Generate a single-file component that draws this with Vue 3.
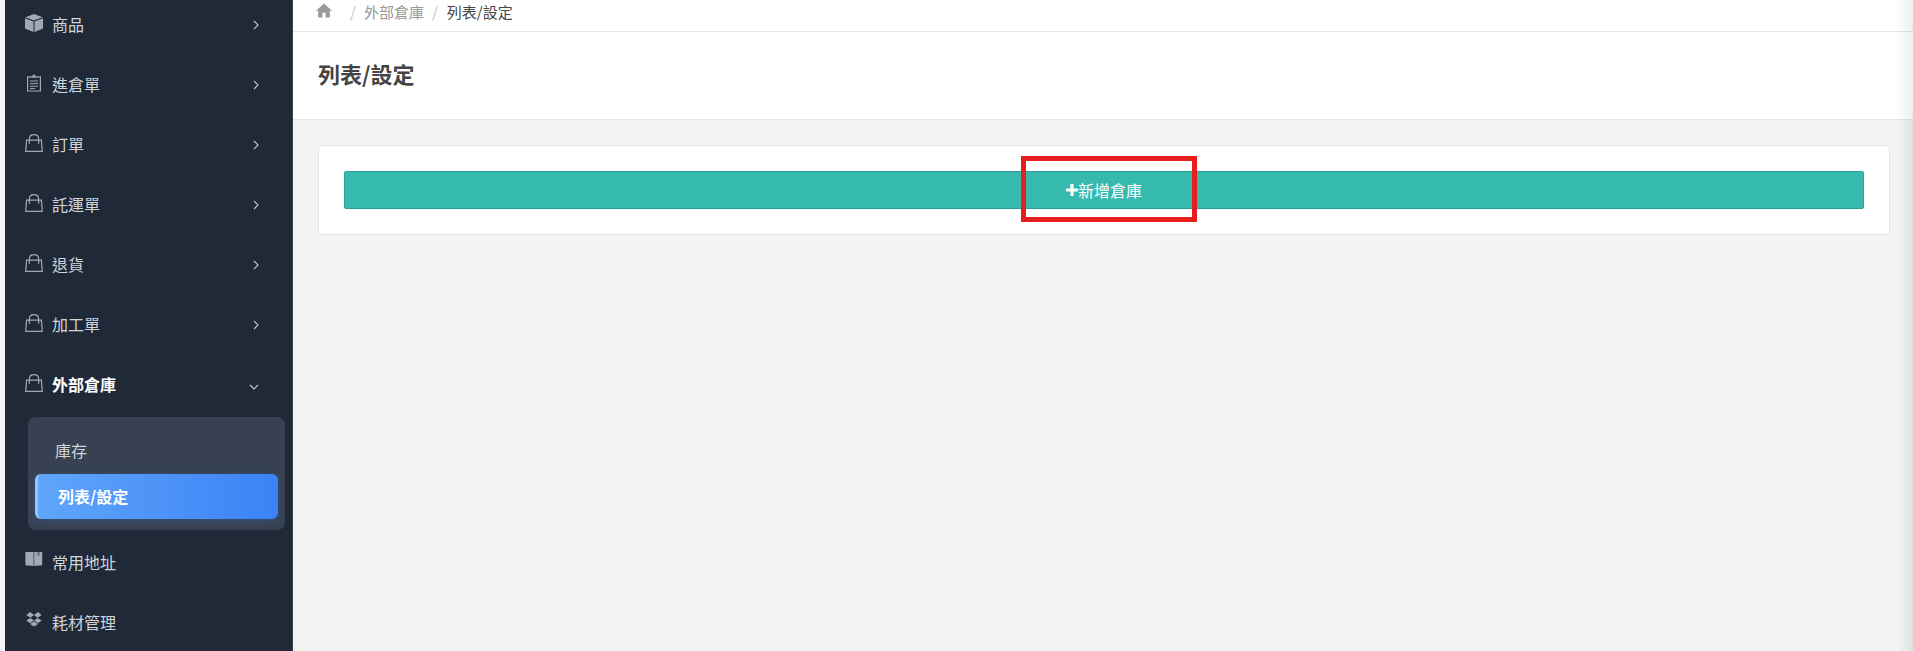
<template>
  <div class="layout">
    <aside class="sidebar">
      <nav class="nav">
        <template v-for="item in menu" :key="item.label">
          <div class="nav-item" :class="{ open: item.open }">
            <svg class="nav-icon" viewBox="0 0 18 18">
              <template v-if="item.icon === 'cube'">
                <path d="M9 0 17.6 3.2 9 6.4 .4 3.2Z" fill="#a3a9b3" />
                <path d="M0 4.2 8.5 7.4V18L0 14.6Z" fill="#a3a9b3" />
                <path d="M18 4.2 9.5 7.4V18L18 14.6Z" fill="#a3a9b3" />
              </template>
              <template v-else-if="item.icon === 'clipboard'">
                <path d="M5.5 2.8H2.6V17H15.4V2.8H12.5" fill="none" stroke="#a3a9b3" stroke-width="1.2" />
                <path d="M5.5 3.8V2.2H7.6V.8H10.4V2.2H12.5V3.8Z" fill="#a3a9b3" />
                <path d="M5 7H13M5 9.6H13M5 12.2H13M5 14.6H10" stroke="#a3a9b3" stroke-width="1" />
              </template>
              <template v-else-if="item.icon === 'bag'">
                <path d="M.7 17.3 1.6 6.2H16.4L17.3 17.3Z" fill="none" stroke="#a3a9b3" stroke-width="1.2" />
                <path d="M4.4 9.8V5C4.4 2.2 6.2.7 9 .7S13.6 2.2 13.6 5V9.8" fill="none" stroke="#a3a9b3" stroke-width="1.2" />
              </template>
              <template v-else-if="item.icon === 'book'">
                <path d="M.4 0H8.6V14L.4 13.2Z" fill="#a3a9b3" />
                <path d="M9.2 0H17.2V13.2L9.2 14Z" fill="#a3a9b3" />
                <path d="M12.4 0H14.6V3.6H12.4Z" fill="#6b7280" />
              </template>
              <template v-else>
                <path d="M5 0 9 3 5.4 5.8 1.4 3Z" fill="#a3a9b3" />
                <path d="M13 0 9 3 12.6 5.8 16.6 3Z" fill="#a3a9b3" />
                <path d="M5.4 6 9 8.6 5 11.2 1.4 8.6Z" fill="#a3a9b3" />
                <path d="M12.6 6 9 8.6 13 11.2 16.6 8.6Z" fill="#a3a9b3" />
                <path d="M5 12 9 9.6 13 12 9 14.4Z" fill="#a3a9b3" />
              </template>
            </svg>
            <span class="nav-label">{{ item.label }}</span>
            <svg v-if="item.arrow" class="chevron" viewBox="0 0 10 10">
              <path :d="item.open ? 'M1 3 5 7 9 3' : 'M3 1 7 5 3 9'" fill="none" stroke="#c5c9cf" stroke-width="1.1" />
            </svg>
          </div>
          <div v-if="item.open" class="submenu">
            <div class="sub-item">庫存</div>
            <div class="sub-item active">列表/設定</div>
          </div>
        </template>
      </nav>
    </aside>

    <main class="main">
      <div class="breadcrumb">
        <svg class="home" viewBox="0 0 16 14">
          <path d="M8 0 16 7.2H13.8V14H9.6V9.2H6.4V14H2.2V7.2H0Z" fill="#999" />
        </svg>
        <span class="sep first">/</span>
        <span class="crumb">外部倉庫</span>
        <span class="sep">/</span>
        <span class="current">列表/設定</span>
      </div>
      <header class="page-head">
        <h1>列表/設定</h1>
      </header>
      <section class="content">
        <div class="card">
          <button class="add-btn" type="button">
            <svg class="plus" viewBox="0 0 12 12">
              <path d="M4.4 0H7.6V4.4H12V7.6H7.6V12H4.4V7.6H0V4.4H4.4Z" fill="#fff" />
            </svg>新增倉庫
            <span class="highlight"></span>
          </button>
        </div>
      </section>
      <div class="edge-shade"></div>
    </main>
  </div>
</template>

<script setup>
const menu = [
  { label: '商品', icon: 'cube', arrow: true },
  { label: '進倉單', icon: 'clipboard', arrow: true },
  { label: '訂單', icon: 'bag', arrow: true },
  { label: '託運單', icon: 'bag', arrow: true },
  { label: '退貨', icon: 'bag', arrow: true },
  { label: '加工單', icon: 'bag', arrow: true },
  { label: '外部倉庫', icon: 'bag', arrow: true, open: true },
  { label: '常用地址', icon: 'book' },
  { label: '耗材管理', icon: 'box' }
]
</script>

<style>
html,
body {
  margin: 0;
  overflow: hidden;
  background: #f3f3f3;
}
</style>

<style scoped>
.layout {
  display: flex;
  height: 651px;
  overflow: hidden;
  padding-left: 5px;
  box-sizing: border-box;
  background: #f3f3f3;
  font-family: "Noto Sans CJK TC", "Liberation Sans", sans-serif;
}

.sidebar {
  width: 288px;
  flex-shrink: 0;
  background: #1f2937;
  border-right: 1px solid #374151;
  box-sizing: border-box;
  overflow: hidden;
}

.nav {
  margin-top: -5px;
}

.nav-item {
  display: flex;
  align-items: center;
  height: 60px;
  padding-left: 20px;
  color: #d1d5db;
  font-size: 16px;
}

.nav-item.open {
  color: #fff;
  font-weight: 700;
}

.nav-icon {
  width: 18px;
  height: 18px;
  margin-right: 9px;
  margin-top: -4px;
  flex-shrink: 0;
}

.nav-label {
  flex: 1;
  margin-top: -3px;
}

.chevron {
  width: 10px;
  height: 10px;
  margin-right: 31px;
}

.nav-item.open .chevron {
  margin-right: 33px;
  margin-top: 4px;
}

.submenu {
  margin: 2px 7px 3px 23px;
  padding: 8px 7px 11px;
  background: #374151;
  border-radius: 8px;
}

.sub-item {
  height: 49px;
  line-height: 50px;
  padding-left: 20px;
  font-size: 16px;
  color: #d1d5db;
}

.sub-item.active {
  height: 45px;
  line-height: 45px;
  padding-left: 20px;
  color: #fff;
  font-weight: 700;
  border-radius: 6px;
  background: linear-gradient(90deg, #60a5fa, #3b82f6);
  border-left: 3px solid #93c5fd;
  box-sizing: border-box;
  box-shadow: 0 2px 8px rgba(59, 130, 246, 0.25);
}

.main {
  position: relative;
  flex: 1;
  min-width: 0;
}

.breadcrumb {
  display: flex;
  align-items: center;
  height: 32px;
  padding: 0 0 9px 23px;
  box-sizing: border-box;
  background: #fff;
  border-bottom: 1px solid #e7e7e7;
  font-size: 15px;
  color: #444;
}

.home {
  width: 16px;
  height: 15px;
  margin-bottom: 2px;
}

.sep {
  color: #c2c2c2;
  margin: 0 9px 0 8px;
}

.sep.first {
  margin: 0 8px 0 18px;
}

.crumb {
  color: #999;
}

.page-head {
  height: 88px;
  display: flex;
  align-items: center;
  padding: 0 0 5px 25px;
  background: #fff;
  border-bottom: 1px solid #e7e7e7;
  box-sizing: border-box;
}

.page-head h1 {
  margin: 0;
  font-size: 22px;
  font-weight: 700;
  color: #444;
}

.content {
  padding: 25px 23px 0 25px;
}

.card {
  padding: 25px;
  background: #fff;
  border: 1px solid #e5e5e5;
  border-radius: 3px;
}

.add-btn {
  position: relative;
  display: flex;
  align-items: center;
  justify-content: center;
  width: 100%;
  height: 38px;
  padding: 0;
  font: inherit;
  font-size: 16px;
  color: #fff;
  background: #36baad;
  border: 1px solid #2a9f94;
  border-radius: 2px;
}

.plus {
  width: 12px;
  height: 12px;
}

.highlight {
  position: absolute;
  left: 676px;
  top: -16px;
  width: 176px;
  height: 66px;
  border: 5px solid #e61e1e;
  box-sizing: border-box;
}

.edge-shade {
  position: absolute;
  top: 0;
  right: 0;
  bottom: 0;
  width: 16px;
  background: linear-gradient(90deg, rgba(0, 0, 0, 0), rgba(0, 0, 0, 0.07));
  pointer-events: none;
}
</style>
